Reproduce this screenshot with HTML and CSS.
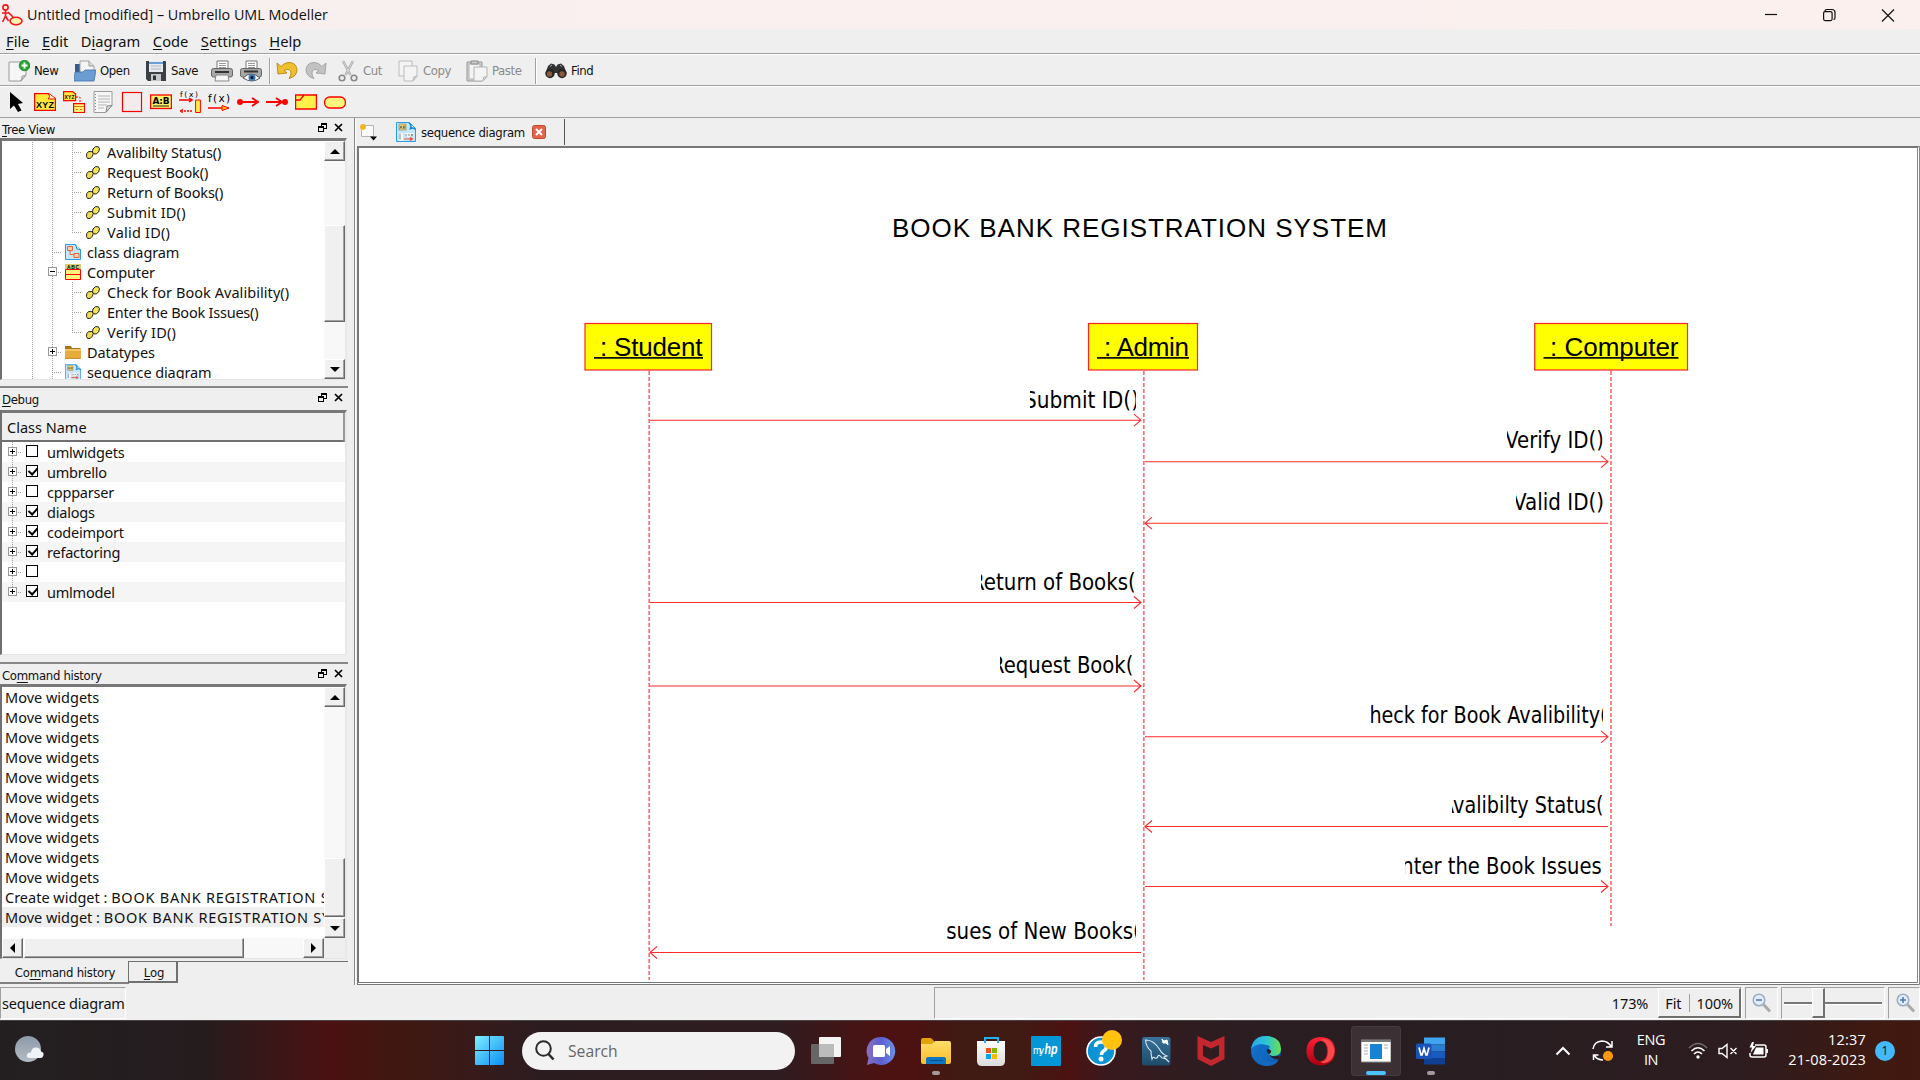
FILE: index.html
```html
<!DOCTYPE html>
<html lang="en">
<head>
<meta charset="utf-8">
<title>Untitled [modified] – Umbrello UML Modeller</title>
<link rel="stylesheet" href="styles.css">
</head>
<body>
<svg class="defs" width="0" height="0" aria-hidden="true">
  <defs>
    <linearGradient id="gWin" x1="0" y1="0" x2="1" y2="1"><stop offset="0" stop-color="#7ef0ff"/><stop offset="1" stop-color="#0a8cf5"/></linearGradient>
    <linearGradient id="gTeams" x1="0" y1="0" x2="1" y2="0"><stop offset="0" stop-color="#8a6fc0"/><stop offset=".5" stop-color="#5a5fd0"/><stop offset="1" stop-color="#6a8fe8"/></linearGradient>
    <linearGradient id="gFold" x1="0" y1="0" x2="0" y2="1"><stop offset="0" stop-color="#ffdc6b"/><stop offset="1" stop-color="#fcbf28"/></linearGradient>
    <linearGradient id="gBag" x1="0" y1="0" x2="0" y2="1"><stop offset="0" stop-color="#fff"/><stop offset="1" stop-color="#dcdcdc"/></linearGradient>
    <linearGradient id="gSql" x1="0" y1="0" x2="0" y2="1"><stop offset="0" stop-color="#39729c"/><stop offset="1" stop-color="#1d4c68"/></linearGradient>
    <linearGradient id="gEdge" x1="0" y1="0" x2="1" y2="0"><stop offset="0" stop-color="#2aa5ee"/><stop offset=".55" stop-color="#2fc6cf"/><stop offset="1" stop-color="#6be04a"/></linearGradient>
    <linearGradient id="gEdge2" x1="0" y1="0" x2="1" y2="1"><stop offset="0" stop-color="#0f7bdc"/><stop offset="1" stop-color="#1157a8"/></linearGradient>
    <linearGradient id="gOpera" x1="0" y1="0" x2="0" y2="1"><stop offset="0" stop-color="#ff2038"/><stop offset="1" stop-color="#a8000f"/></linearGradient>
    <linearGradient id="gSky" x1="0" y1="0" x2="0" y2="1"><stop offset="0" stop-color="#8c9aa8"/><stop offset="1" stop-color="#b4bcc4"/></linearGradient>
    <symbol id="op" viewBox="0 0 14 13"><path d="M.700 7.700 2.500 5.600h3.300L7.300 7.200 6.500 10l-2.200 2.400H1.500L.500 10.500Z" fill="#f0dc50" stroke="#222"/><path d="M7 3 9.300.700h3L13.500 2.800l-.8 3L10.200 7.900H8L6.500 6Z" fill="#f5e35a" stroke="#222"/></symbol>
    <symbol id="float" viewBox="0 0 9 9"><path d="M3 0h6v6H6v3H0V3h3ZM4 2v1h2v2h2V2ZM1 5v3h4V5Z" fill="#000" fill-rule="evenodd"/></symbol>
    <symbol id="close" viewBox="0 0 9 9"><path d="m1 1 7 7M8 1 1 8" stroke="#000" stroke-width="1.700"/></symbol>
    <symbol id="seq" viewBox="0 0 20 20"><path d="M.500.500h13l6 6v13H.500Z" fill="#c6e6fa" stroke="#2d9be6"/><path d="M13 1q3 2 1.500 5.500Q18 5 19.500 7.500" fill="#e8f6ff" stroke="#1487dc" stroke-width="1.500"/><path d="M3 2h7v6H3Z" fill="#e8d27a" stroke="#8c7850" stroke-width=".6"/><path d="M4 6.500 5 4l1 2.500M7.500 3.700v3M8.800 3.700v3" stroke="#554" fill="none" stroke-width=".8"/><path d="M3 11h4v8H3Zm6 0h9v4H9Z" fill="#fff" opacity=".8"/><path d="M4 11.500v6M10 12v2.500M12 13h2M15 12l2 2.500M17 12l-2 2.500" stroke="#667" stroke-width=".8"/><path d="M8 17h8m-2-1.500 2.500 1.500-2.500 1.500" stroke="#e8523c" stroke-width="1.200" fill="none"/></symbol>
  </defs>
</svg>

<div class="window">
  <header class="title-bar">
    <svg class="app-icon" width="22" height="22" viewBox="0 0 22 22" fill="none" stroke="#f01818" stroke-width="1.600"><circle cx="4.500" cy="3.500" r="2.600"/><path d="M4.500 6v6M1 9h7M4.500 12l-3 6M4.500 12l3 5M7 8l6 6"/><ellipse cx="15" cy="17" rx="6" ry="3.800" fill="#fdf3b0"/></svg>
    <span class="caption">Untitled [modified] – Umbrello UML Modeller</span>
    <svg class="win-ctl" width="130" height="14" viewBox="0 0 130 14" fill="none" stroke="#111" stroke-width="1.200"><path d="M0 6.500h12"/><path d="M60 3.500q0-2 2-2h5q3 0 3 3v5q0 2-1.500 2"/><rect x="58.600" y="3.600" width="8.500" height="9" rx="1.500"/><path d="m117 1.500 12 12m0-12-12 12"/></svg>
  </header>

  <nav class="menu-bar"><span><u>F</u>ile</span><span><u>E</u>dit</span><span>D<u>i</u>agram</span><span><u>C</u>ode</span><span><u>S</u>ettings</span><span><u>H</u>elp</span></nav>

  <div class="toolbar main-tools">
    <svg width="22" height="22" viewBox="0 0 22 22"><path d="M1 2h13l4 3v10l-5 6H1Z" fill="#f6f6f6" stroke="#9a9a9a"/><path d="m13 21 1-5 4-1Z" fill="#ccc" stroke="#888" stroke-width=".6"/><circle cx="16.500" cy="5.500" r="5.300" fill="#26a534" stroke="#13721e" stroke-width=".7"/><path d="M16.500 2.500v6m-3-3h6" stroke="#fff" stroke-width="2"/></svg><span>New</span>
    <svg width="22" height="22" viewBox="0 0 22 22"><path d="M1 4h6l2 3h10v13H1Z" fill="#315c8c"/><path d="M6 1h9l5 5v7H6Z" fill="#f5f5f5" stroke="#a0a0a0"/><path d="M15 1v5h5" fill="#ddd" stroke="#999"/><path d="M1 12h8l2-2h11l-2 11H0Z" fill="#6b9cd2" stroke="#3f71a8" stroke-width=".8"/></svg><span>Open</span>
    <svg width="22" height="22" viewBox="0 0 22 22"><path d="M1 1h19q1 0 1 1v19H3l-2-2Z" fill="#3c3f43"/><path d="M4 1h14v11H4Z" fill="#e6eaef"/><path d="M4 2h14v2H4Z" fill="#6a9ed6"/><path d="M6 6h10M6 9h10" stroke="#b5b9be"/><path d="M6 14h10v7H6Z" fill="#c4c7cb"/><path d="M8 15.500h3V20H8Z" fill="#333"/></svg><span>Save</span>
    <svg width="22" height="22" viewBox="0 0 22 22"><path d="M6 1h11v9H6Z" fill="#fff" stroke="#777"/><path d="M8 3.500h7M8 5.500h7M8 7.500h7" stroke="#999"/><rect x=".5" y="8.500" width="21" height="8.500" rx="2" fill="#a8a8a8" stroke="#666"/><path d="M4 11h14v2H4Z" fill="#333"/><path d="M5 15h12l1 6H4Z" fill="#f5f5f5" stroke="#888"/></svg>
    <svg width="22" height="22" viewBox="0 0 22 22"><path d="M6 1h11v9H6Z" fill="#fff" stroke="#777"/><path d="M8 3.500h7M8 5.500h7M8 7.500h7" stroke="#999"/><rect x=".5" y="8.500" width="21" height="8.500" rx="2" fill="#a8a8a8" stroke="#666"/><path d="M4 10.500h14v2H4Z" fill="#333"/><path d="M3 18q8-8 17 0-8 6-17 0Z" fill="#fff" stroke="#555"/><circle cx="12" cy="17.500" r="3.500" fill="#3f78b4"/><circle cx="12" cy="17.500" r="1.500" fill="#112"/></svg>
    <i class="sep"></i>
    <svg width="22" height="20" viewBox="0 0 22 20"><path d="m1 2 1 11 9-1-3-2.500q7-3 7 3 0 2-2 5 8-2 8-9Q20 1 12 1.500 8 2 5 5.500Z" fill="#eebf2e" stroke="#b8860b" stroke-width=".9"/></svg>
    <svg width="22" height="20" viewBox="0 0 22 20"><path d="m21 2-1 11-9-1 3-2.500q-7-3-7 3 0 2 2 5-8-2-8-9Q2 1 10 1.500q4 .5 7 4Z" fill="#c2c2c2" stroke="#a0a0a0" stroke-width=".9"/></svg>
    <svg width="20" height="22" viewBox="0 0 20 22" fill="none" stroke="#a2a2a2"><path d="M5 1 12.500 15M15 1 7.500 15" stroke-width="2.400"/><path d="M5 1 12.500 15M15 1 7.500 15" stroke="#e8e8e8" stroke-width=".8"/><circle cx="4" cy="18" r="2.800" stroke="#888" stroke-width="1.600"/><circle cx="16" cy="18" r="2.800" stroke="#888" stroke-width="1.600"/></svg><span class="off">Cut</span>
    <svg width="20" height="22" viewBox="0 0 20 22" fill="#f4f4f4" stroke="#bcbcbc"><path d="M1 1h13v15H1Z"/><path d="M6 6h13v10l-4 5H6Z"/><path d="m15 21 .5-4 3.500-1Z" fill="#ddd"/></svg><span class="off">Copy</span>
    <svg width="22" height="22" viewBox="0 0 22 22" fill="#f4f4f4" stroke="#b4b4b4"><path d="M1 2h15v19H1Z" fill="#d0d0d0" stroke="#999"/><path d="M3 4h11v15H3Z"/><path d="M5 1h7v3H5Z" fill="#ccc" stroke="#888"/><path d="M8 7h13v10l-4 4H8Z"/><path d="m17 21 .5-4H21Z" fill="#ddd"/></svg><span class="off">Paste</span>
    <i class="sep"></i>
    <svg width="22" height="16" viewBox="0 0 22 16"><path d="m3 3 3-2.500 3.500 1L11 4l1.500-2.500L16 .500 19 3l2.500 7H.500Z" fill="#333"/><circle cx="5" cy="10.500" r="4.700" fill="#262626"/><circle cx="17" cy="10.500" r="4.700" fill="#262626"/><circle cx="4.500" cy="11" r="2.700" fill="#8c5a38"/><circle cx="17" cy="11" r="2.700" fill="#8c5a38"/><path d="M5 3.500 7 2M15 2l2 1.500" stroke="#aaa"/></svg><span>Find</span>
  </div>

  <div class="toolbar uml-tools">
    <svg viewBox="0 0 22 22"><path d="M1 1v17l4-3.500 4 6.500 3.500-1.500L9 13l5-1Z" fill="#000"/></svg>
    <svg viewBox="0 0 22 22"><path d="M.6 2.600h14l6.800 5v11.800H.600Z" fill="#ffe93c" stroke="red" stroke-width="1.200"/><path d="M14.500 2.500q2 3 0 5.500h7" fill="#fffac0" stroke="red"/><text x="2" y="16.500" class="t-xyz" textLength="18">XYZ</text></svg>
    <svg viewBox="0 0 22 22"><path d="M.6.600h9l3 2.500v6.500H.600Z" fill="#ffe93c" stroke="red" stroke-width="1.200"/><text x="1.500" y="8" class="t-xs" textLength="10">XYZ</text><path d="M13 6h4v6" fill="none" stroke="red" stroke-dasharray="2 1.500"/><path d="M10.600 12.600h11v9h-11Z" fill="#fff17a" stroke="red" stroke-width="1.200"/><path d="M11 15.500h10M13 18.500h2m2 0h2" stroke="#e07800"/></svg>
    <svg viewBox="0 0 22 22"><path d="M2 .500h18v14l-6 7H2Z" fill="#f6f6f6" stroke="#9a9a9a"/><path d="M6 5h12M6 8h12M6 11h12M6 14h9M6 17h6" stroke="#b4b4b4"/><path d="m14 21 1-6 5-.500Z" fill="#ddd" stroke="#888"/><path d="M3.500 3v17" stroke="#888" stroke-dasharray="1 2"/></svg>
    <svg viewBox="0 0 22 22"><rect x="1.500" y="1.500" width="19" height="19" fill="#f3ecec" stroke="red" stroke-width="1.200"/></svg>
    <svg viewBox="0 0 22 22"><rect x=".6" y="4" width="20.800" height="13.500" fill="#fff36b" stroke="red" stroke-width="1.300"/><text x="2.500" y="13" class="t-ab" textLength="17">A:B</text><path d="M3 15h16" stroke="#222"/></svg>
    <svg viewBox="0 0 22 22"><text x="1" y="5.500" class="t-fs" textLength="18">f(x)</text><path d="M0 9h13m-3-2 3 2-3 2M1 20h13" stroke="red" stroke-width="1.500" fill="none"/><path d="M1 20h13" stroke="#efefef" stroke-width="2" stroke-dasharray="1 2"/><path d="m4 18-3 2 3 2" stroke="red" fill="none"/><path d="M16.600 9h4.800v12.500h-4.800Z" fill="#ffee44" stroke="red"/></svg>
    <svg viewBox="0 0 22 22"><text x="0" y="11" class="t-fx" textLength="22">f(x)</text><path d="M0 17h20" stroke="red" stroke-width="1.500"/><path d="m14 14.500 7 2.500-7 2.500Z" fill="#fc0" stroke="red"/></svg>
    <svg viewBox="0 0 22 22"><circle cx="3" cy="11" r="3" fill="red"/><path d="M3 11h18m-6-4 6 4-6 4" stroke="red" stroke-width="1.800" fill="none"/></svg>
    <svg viewBox="0 0 22 22"><circle cx="19" cy="11" r="3" fill="red"/><path d="M0 11h16m-6-4 6 4-6 4" stroke="red" stroke-width="1.800" fill="none"/></svg>
    <svg viewBox="0 0 22 22"><path d="M.6 4h20.800v14H.600Z" fill="#fff04a" stroke="red" stroke-width="1.300"/><path d="M1 9h4l4-5" fill="none" stroke="red" stroke-width="1.300"/></svg>
    <svg viewBox="0 0 22 22"><rect x=".6" y="6" width="20.800" height="11" rx="5" fill="#fdf57c" stroke="red" stroke-width="1.300"/></svg>
  </div>

  <div class="workspace">
    <aside class="docks">
      <section class="dock dock-tree">
        <h2><span><u>T</u>ree View</span><svg width="9" height="9"><use href="#float"/></svg><svg width="9" height="9"><use href="#close"/></svg></h2>
        <div class="box">
          <ul class="tree">
            <li><i class="g"></i><i class="g"></i><i class="g stub"></i><svg class="op"><use href="#op"/></svg><span>Avalibilty Status()</span></li>
            <li><i class="g"></i><i class="g"></i><i class="g stub"></i><svg class="op"><use href="#op"/></svg><span>Request Book()</span></li>
            <li><i class="g"></i><i class="g"></i><i class="g stub"></i><svg class="op"><use href="#op"/></svg><span>Return of Books()</span></li>
            <li><i class="g"></i><i class="g"></i><i class="g stub"></i><svg class="op"><use href="#op"/></svg><span class="loose">Submit ID()</span></li>
            <li><i class="g"></i><i class="g"></i><i class="g stub last"></i><svg class="op"><use href="#op"/></svg><span class="loose">Valid ID()</span></li>
            <li><i class="g"></i><i class="g stub"></i><svg class="cls" viewBox="0 0 16 16"><path d="M.500.500h10l5 5v10H.500Z" fill="#c6e6fa" stroke="#2d9be6"/><path d="M10.500.500 12 5l3.500.500" fill="#fff" stroke="#1487dc"/><path d="M2.500 2.500h5v4h-5Zm6.500 7h5v4H9Z" fill="#fbd6b0" stroke="#e8643c"/><path d="M5 6.500v4h4" stroke="#e8643c" fill="none"/></svg><span>class diagram</span></li>
            <li><i class="g"></i><i class="g stub"><b class="exp minus"></b></i><svg class="cls" viewBox="0 0 16 16"><path d="M0 0h16v6H0Z" fill="#d8cf70"/><path d="M.500 5.500h15v10H.500Z" fill="#fff27a" stroke="red"/><path d="M1 10.500h14" stroke="red"/><text x="2" y="4.500" class="t-xs" textLength="12">ABC</text></svg><span>Computer</span></li>
            <li><i class="g"></i><i class="g"></i><i class="g stub"></i><svg class="op"><use href="#op"/></svg><span class="airy">Check for Book Avalibility()</span></li>
            <li><i class="g"></i><i class="g"></i><i class="g stub"></i><svg class="op"><use href="#op"/></svg><span class="snug">Enter the Book Issues()</span></li>
            <li><i class="g"></i><i class="g"></i><i class="g stub last"></i><svg class="op"><use href="#op"/></svg><span class="loose">Verify ID()</span></li>
            <li><i class="g"></i><i class="g stub"><b class="exp plus"></b></i><svg class="cls" viewBox="0 0 16 16"><path d="M0 2h6l1 2h8.500v11H0Z" fill="#a87420"/><path d="M0 5h16v9.500H0Z" fill="#e6ac3c"/><path d="M0 5h16v2H0Z" fill="#f2c666"/></svg><span>Datatypes</span></li>
            <li><i class="g"></i><i class="g stub"></i><svg class="cls"><use href="#seq"/></svg><span>sequence diagram</span></li>
          </ul>
          <div class="vscroll"><b class="btn up"></b><div class="track"><b class="thumb tree-thumb"></b></div><b class="btn down"></b></div>
        </div>
      </section>

      <section class="dock dock-debug">
        <h2><span><u>D</u>ebug</span><svg width="9" height="9"><use href="#float"/></svg><svg width="9" height="9"><use href="#close"/></svg></h2>
        <div class="box debug-box">
          <div class="col-head">Class Name</div>
          <ul class="checks">
            <li><i class="g stub"><b class="exp plus"></b></i><b class="cb"></b><span>umlwidgets</span></li>
            <li><i class="g stub"><b class="exp plus"></b></i><b class="cb on"></b><span>umbrello</span></li>
            <li><i class="g stub"><b class="exp plus"></b></i><b class="cb"></b><span>cppparser</span></li>
            <li><i class="g stub"><b class="exp plus"></b></i><b class="cb on"></b><span>dialogs</span></li>
            <li><i class="g stub"><b class="exp plus"></b></i><b class="cb on"></b><span>codeimport</span></li>
            <li><i class="g stub"><b class="exp plus"></b></i><b class="cb on"></b><span>refactoring</span></li>
            <li><i class="g stub"><b class="exp plus"></b></i><b class="cb"></b><span></span></li>
            <li><i class="g stub last"><b class="exp plus"></b></i><b class="cb on"></b><span>umlmodel</span></li>
          </ul>
        </div>
      </section>

      <section class="dock dock-cmd">
        <h2><span>Co<u>m</u>mand history</span><svg width="9" height="9"><use href="#float"/></svg><svg width="9" height="9"><use href="#close"/></svg></h2>
        <div class="box cmd-box">
          <ul class="history">
            <li>Move widgets</li><li>Move widgets</li><li>Move widgets</li><li>Move widgets</li><li>Move widgets</li>
            <li>Move widgets</li><li>Move widgets</li><li>Move widgets</li><li>Move widgets</li><li>Move widgets</li>
            <li><span>Create widget : </span><span class="wide">BOOK BANK REGISTRATION SYSTEM</span></li>
            <li class="sel"><span>Move widget : </span><span class="wide">BOOK BANK REGISTRATION SYSTEM</span></li>
          </ul>
          <div class="vscroll"><b class="btn up"></b><div class="track"><b class="thumb cmd-thumb"></b></div><b class="btn down"></b></div>
          <div class="hscroll"><b class="btn left"></b><div class="track"><b class="thumb"></b></div><b class="btn right"></b></div>
        </div>
      </section>
      <div class="dock-tabs"><span class="cur">Co<u>m</u>mand history</span><span class="log"><u>L</u>og</span></div>
    </aside>

    <main class="editor">
      <div class="tabs">
        <svg class="new-tab" width="19" height="18" viewBox="0 0 19 18"><path d="M5 2.500h9.500v11H2.500V6" fill="#fafafa" stroke="#b4b4b4"/><circle cx="4" cy="4" r="3" fill="#f0b828"/><path d="M11 13.500h7l-3.500 4Z" fill="#000"/></svg>
        <div class="tab">
          <svg width="20" height="20"><use href="#seq"/></svg>
          <span>sequence diagram</span>
          <svg width="14" height="14" viewBox="0 0 14 14"><rect x=".5" y=".5" width="13" height="13" rx="2" fill="#e0654a" stroke="#c0492f"/><path d="m4 4 6 6m0-6-6 6" stroke="#fff" stroke-width="2"/></svg>
        </div>
      </div>
      <div class="canvas">
        <svg width="1558" height="835" viewBox="359 148 1558 835">
          <text class="head" x="892" y="237" textLength="495">BOOK BANK REGISTRATION SYSTEM</text>
          <g class="life"><path d="M649.200 371V980M1143.800 371V980M1611 371V926"/></g>
          <g class="role">
            <rect x="585" y="323.500" width="126.500" height="46.500"/><rect x="1088.500" y="323.500" width="109" height="46.500"/><rect x="1534.700" y="323.500" width="152.800" height="46.500"/>
            <text x="600" y="356" textLength="102.500">: Student</text><text x="1104" y="356" textLength="85">: Admin</text><text x="1550" y="356" textLength="128.500">: Computer</text>
            <path d="M594 357.800h109M1097 357.800h92M1543.500 357.800h135"/>
          </g>
          <g class="msg">
            <path d="M650 420.200h491m-7-6 7 6-7 6"/>
            <path d="M1145 461.700h463m-7-6 7 6-7 6"/>
            <path d="M1608 523.200h-463m7-6-7 6 7 6"/>
            <path d="M650 602.500h491m-7-6 7 6-7 6"/>
            <path d="M650 686h491m-7-6 7 6-7 6"/>
            <path d="M1145 736.800h463m-7-6 7 6-7 6"/>
            <path d="M1608 826.500h-463m7-6-7 6 7 6"/>
            <path d="M1145 886.500h463m-7-6 7 6-7 6"/>
            <path d="M1141 952.500h-491m7-6-7 6 7 6"/>
          </g>
          <g class="lbl">
            <svg x="1030" y="386" width="106" height="28"><text x="-6" y="21.500" textLength="115" lengthAdjust="spacingAndGlyphs">Submit ID()</text></svg>
            <svg x="1507" y="426" width="95.500" height="28"><text x="-2" y="22" textLength="99" lengthAdjust="spacingAndGlyphs">Verify ID()</text></svg>
            <svg x="1516" y="488" width="87" height="28"><text x="-3" y="21.500" textLength="91" lengthAdjust="spacingAndGlyphs">Valid ID()</text></svg>
            <svg x="981" y="568" width="153.500" height="28"><text x="-10" y="22" textLength="172.500" lengthAdjust="spacingAndGlyphs">Return of Books()</text></svg>
            <svg x="1000" y="651" width="132.500" height="28"><text x="-9" y="22" textLength="150" lengthAdjust="spacingAndGlyphs">Request Book()</text></svg>
            <svg x="1371" y="701" width="232" height="28"><text x="-15" y="21.500" textLength="259" lengthAdjust="spacingAndGlyphs">Check for Book Avalibility()</text></svg>
            <svg x="1452" y="791" width="151" height="28"><text x="-11" y="22" textLength="170" lengthAdjust="spacingAndGlyphs">Avalibilty Status()</text></svg>
            <svg x="1405" y="852" width="196" height="28"><text x="-16" y="22" textLength="228" lengthAdjust="spacingAndGlyphs">Enter the Book Issues()</text></svg>
            <svg x="947" y="917" width="189" height="28"><text x="-17" y="22" textLength="218.500" lengthAdjust="spacingAndGlyphs">Issues of New Books()</text></svg>
          </g>
        </svg>
      </div>
    </main>
  </div>

  <footer class="status">
    <div class="cell msg-cell">sequence diagram</div>
    <div class="cell zoom-cell"><span>173%</span><div class="fit"><span>Fit</span><i></i><span>100%</span></div></div>
    <div class="cell mag"><svg width="20" height="20" viewBox="0 0 20 20" fill="none"><path d="m11.500 11.500 6.500 7" stroke="#aaa" stroke-width="3"/><circle cx="7" cy="7" r="5.800" fill="#e2ecf8" stroke="#9cadc2" stroke-width="1.500"/><path d="M4 7h6" stroke="#4a78b0" stroke-width="1.500"/></svg></div>
    <div class="cell slider"><i></i><b></b></div>
    <div class="cell mag mag-in"><svg width="20" height="20" viewBox="0 0 20 20" fill="none"><path d="m11.500 11.500 6.500 7" stroke="#aaa" stroke-width="3"/><circle cx="7" cy="7" r="5.800" fill="#e2ecf8" stroke="#9cadc2" stroke-width="1.500"/><path d="M4 7h6M7 4v6" stroke="#4a78b0" stroke-width="1.500"/></svg></div>
  </footer>
</div>

<div class="taskbar">
  <svg class="weather" width="30" height="30" viewBox="0 0 30 30"><circle cx="13" cy="13" r="13" fill="url(#gSky)"/><path d="M14 22q-3-1-2-3.500 1-2.500 4-2 1-5.500 5-5 4 0 5 4 3 .5 2.500 3.500-.5 3-3 3Z" fill="#f0f3f5"/></svg>
  <svg class="start" width="29" height="29" viewBox="0 0 29 29" fill="url(#gWin)"><path d="M1 0h13v14H0V1Q0 0 1 0Zm14 0h13q1 0 1 1v13H15ZM0 15h14v14H1q-1 0-1-1Zm15 0h14v13q0 1-1 1H15Z"/></svg>
  <div class="search"><svg width="20" height="21" viewBox="0 0 20 21" fill="none" stroke="#2b2b2b" stroke-width="2"><circle cx="8.500" cy="8.500" r="7.300"/><path d="m13.500 14 5 5.500" stroke-width="2.600"/></svg><span>Search</span></div>
  <div class="apps">
    <div class="app"><svg viewBox="0 0 30 30"><rect x="0" y="8" width="23" height="20" rx="1" fill="#666"/><rect x="8" y="1" width="22" height="20" rx="1" fill="#f4f4f4"/><path d="M8 8h15v13H8Z" fill="#bcbcbc"/></svg></div>
    <div class="app"><svg viewBox="0 0 30 30"><path d="M15 1a14 14 0 1 1-7 26l-7 2 1.500-7A14 14 0 0 1 15 1Z" fill="url(#gTeams)"/><rect x="7" y="9" width="12" height="12" rx="1.500" fill="#fff"/><path d="m20 13 4-3v10l-4-3Z" fill="#fff"/></svg></div>
    <div class="app run"><svg viewBox="0 0 30 30"><path d="M0 4q0-2 2-2h8l3 3v5H0Z" fill="#e2a306"/><path d="M0 8h11l3-3h14q2 0 2 2v19q0 2-2 2H2q-2 0-2-2Z" fill="url(#gFold)"/><path d="M5 28v-5q0-2 2-2h16q2 0 2 2v5Z" fill="#0f76c4"/><path d="M9 24.500h13" stroke="#074f8c"/></svg></div>
    <div class="app"><svg viewBox="0 0 30 30"><path d="M1 5h28v20q0 5-5 5H6q-5 0-5-5Z" fill="url(#gBag)"/><path d="M9 7V2h13v5" fill="none" stroke="#23b0ee" stroke-width="2"/><path d="M10 12h5v5h-5Z" fill="#f25022"/><path d="M16 12h5v5h-5Z" fill="#7fba00"/><path d="M10 18h5v5h-5Z" fill="#00a4ef"/><path d="M16 18h5v5h-5Z" fill="#ffb900"/></svg></div>
    <div class="app"><svg viewBox="0 0 30 30"><rect width="30" height="30" rx="1" fill="#0596d5"/><text x="2" y="18" class="t-my" textLength="11">my</text><text x="13.500" y="18" class="t-hp" textLength="13" lengthAdjust="spacingAndGlyphs">hp</text></svg></div>
    <div class="app"><svg viewBox="0 0 30 30" overflow="visible"><circle cx="15" cy="15" r="14" fill="#0a94d6" stroke="#fff" stroke-width="1.600"/><path d="M9.500 11q0-5 5.500-5t5.500 4.500q0 3-3 4.500-2 1-2 4" fill="none" stroke="#fff" stroke-width="3.600"/><circle cx="15" cy="23" r="2.500" fill="#fff"/><circle cx="26" cy="4" r="10" fill="#ffc20e"/></svg></div>
    <div class="app"><svg viewBox="0 0 30 30"><rect x="1" y="1" width="28.500" height="28.500" rx="2.500" fill="url(#gSql)"/><path d="M5 4q8 0 14 10 2 4 7 6l-3 1 5 5q-3-4-7-4-3-4-4-2-1 3-3 2-2-2-3 1-1-4-1-8Q5 11 4.500 4Z" fill="none" stroke="#dce8f0" stroke-width="1.100"/><path d="m21 3 2 2 3-1 1 5-2-2-3 0Z" fill="#fff" stroke="#fff"/></svg></div>
    <div class="app"><svg viewBox="0 0 30 30"><path d="m1.500 0 13.500 6L28.500 0v23L15 30 1.500 23ZM7 9v11l8 4 8-4V9l-8 3.500Z" fill="#c1272d" fill-rule="evenodd"/></svg></div>
    <div class="app"><svg viewBox="0 0 30 30"><circle cx="15" cy="15" r="15" fill="url(#gEdge2)"/><path d="M0 13Q2 0 15 0q15 1 15 13 0 7-8 7-4 0-4-2 2-2 1-4-2-6-9-6-7 1-10 5Z" fill="url(#gEdge)"/><path d="M19 12q-5-3-8 1-3 6 3 11 6 4 14 0-4 6-13 6Q3 28 5 17q2-9 10-8 4 0 4 3Z" fill="#1468bf"/><path d="M18 18q-3-2-2-5 5 1 4 3-1 2-2 2Z" fill="#2b1d21"/><path d="M18 18.500q4 3 11 1l-1 3.500q-6 1-10-4.500Z" fill="#2b1d21"/></svg></div>
    <div class="app"><svg viewBox="0 0 30 30"><path d="M14 1q15 0 15 14T14 29.500Q.500 28 .500 15T14 1Zm1 4q-7 0-7.500 10T15 25q6-1 6-10T15 5Z" fill="url(#gOpera)" fill-rule="evenodd"/><path d="M14 4q6-3 11 2 7 9 0 18-5 5-11 2 8-1 8-11T14 4Z" fill="#fa4a4a"/></svg></div>
    <div class="app active"><svg viewBox="0 0 30 30"><rect x="0" y="4" width="30" height="22" fill="#fdfdfd" stroke="#8a8a8a"/><path d="M0 4h30v2H0Z" fill="#777"/><rect x="9" y="8" width="12" height="15" fill="#1582d4"/><path d="M3 9h4M3 12h4M3 15h4M3 18h4M23 9h4M23 12h4" stroke="#aaa"/></svg></div>
    <div class="app run"><svg viewBox="0 0 30 30"><path d="M8 1.500h21v7H8Z" fill="#41a5ee"/><path d="M8 8.500h21v7H8Z" fill="#2b7cd3"/><path d="M8 15.500h21v7H8Z" fill="#185abd"/><path d="M8 22h21v6.500H8Z" fill="#103f91"/><rect x="0" y="7.500" width="15.500" height="15.500" rx="1.500" fill="#1a53b8"/><path d="m3 11.500 2 7.500h1l2-6.500 2 6.500h1l2-7.500" fill="none" stroke="#fff" stroke-width="1.700"/></svg></div>
  </div>
  <div class="tray">
    <svg width="16" height="12" viewBox="0 0 16 12" fill="none" stroke="#fff" stroke-width="2"><path d="m1.500 9.500 6.500-6.500 6.500 6.500"/></svg>
    <svg width="22" height="22" viewBox="0 0 22 22" fill="none" stroke="#fff" stroke-width="1.500"><path d="M1 9q1-7.500 9-8 6 0 9.500 6M20 1v6h-6M1.500 20v-5h5M2 15q3 5 9 5"/><circle cx="16" cy="16" r="5" fill="#ff9810" stroke="none"/></svg>
    <div class="lang"><span>ENG</span><span>IN</span></div>
    <svg width="20" height="20" viewBox="0 0 20 20" fill="none" stroke="#fff" stroke-width="1.600"><path d="M1 7q9-9 18 0" opacity=".35"/><path d="M3.500 10q6.500-6.500 13 0M6 13q4-4 8 0"/><circle cx="10" cy="16" r="1.700" fill="#fff" stroke="none"/></svg>
    <svg width="20" height="20" viewBox="0 0 20 20" fill="none" stroke="#fff" stroke-width="1.400"><path d="M1 7.500h3l5-4v13l-5-4H1Zm11.500-.5 6 6m0-6-6 6"/></svg>
    <svg width="20" height="20" viewBox="0 0 20 20" fill="none" stroke="#fff" stroke-width="1.500"><path d="M7 4h9q2 0 2 2v8q0 2-2 2H4q-2 0-2-2v-2M19.200 8v4"/><path d="M8 6.500h7.500v7H5Z" fill="#fff" stroke="none"/><path d="M4 1 1.500 6.500H4L2.500 12l5.500-7H5l1-4Z" fill="#fff" stroke="none"/></svg>
    <div class="clock"><span>12:37</span><span>21-08-2023</span></div>
    <b class="badge">1</b>
  </div>
</div>
</body>
</html>
```

FILE: styles.css
```css
* { box-sizing: border-box; }
body { margin: 0; width: 1920px; height: 1080px; overflow: hidden; background: #efefef; font-family: "Noto Sans", "Open Sans", sans-serif; font-size: 14px; color: #111; display: flex; flex-direction: column; }
ul, h2 { margin: 0; padding: 0; list-style: none; font-weight: normal; }
svg { display: block; flex: none; }
span { white-space: nowrap; }
u { text-underline-offset: 2px; }
.defs { position: absolute; }
.window { height: 1020px; display: flex; flex-direction: column; }

.title-bar { height: 29px; background: linear-gradient(90deg, #f7efef, #fbf0ee); display: flex; align-items: center; padding-left: 1px; }
.caption { margin-left: 4px; flex: 1; font-family: "Open Sans", sans-serif; font-size: 14.350px; }
.win-ctl { margin-right: 25px; }

.menu-bar { height: 26px; border-bottom: 1px solid #fff; box-shadow: inset 0 -1px #a0a0a0; display: flex; gap: 12.500px; align-items: center; padding: 0 0 2px 6px; font-size: 14.700px; }

.toolbar { height: 32px; border-bottom: 1px solid #fff; box-shadow: inset 0 -1px #a0a0a0; align-items: center; font-family: "DejaVu Sans Condensed", "Noto Sans", sans-serif; font-size: 13px; }
.main-tools { display: grid; grid-template-columns: 26px 40px 26px 45px 26px 40px 29px 29px 7px 29px 33px 25px 35px 25px 43px 26px 43px 10px 26px 60px; padding-left: 8px; }
.main-tools span { letter-spacing: -.4px; }
.off { color: #8a8a8a; }
.sep { width: 2px; height: 26px; background: #a0a0a0; border-right: 1px solid #fff; }
.uml-tools { display: flex; gap: 7px; padding: 0 0 2px 5px; height: 31px; border-bottom: 0; }
.uml-tools svg { width: 22px; height: 22px; }
.uml-tools svg:first-child { margin: 0 -4px 0 4px; }
text { font-family: "Liberation Sans", sans-serif; }
.t-xyz { font-weight: bold; font-size: 9px; }
.t-xs { font-weight: bold; font-size: 5px; }
.t-ab { font: bold 9px "DejaVu Sans", sans-serif; }
.t-fs { font: 7.500px "DejaVu Sans", sans-serif; }
.t-fx { font: 10.500px "DejaVu Sans", sans-serif; }
.t-my { font-size: 10px; fill: #fff; }
.t-hp { font-size: 15px; font-style: italic; font-weight: bold; fill: #fff; }

.workspace { height: 867px; display: flex; }
.docks { width: 354px; padding-right: 6px; display: flex; flex-direction: column; }
.dock { display: flex; flex-direction: column; }
.dock h2 { height: 20px; padding: 0 5px 0 2px; display: flex; align-items: center; gap: 7px; font-family: "DejaVu Sans Condensed", "Noto Sans", sans-serif; font-size: 13px; letter-spacing: -.3px; }
.dock h2 span { flex: 1; padding-top: 3px; }
.dock h2 svg { margin-bottom: 1px; }
.dock-tree { height: 268px; }
.dock-debug { height: 276px; border-top: 2px solid #888; }
.dock-cmd { height: 299px; border-top: 2px solid #888; }
.dock-debug h2 { height: 22px; padding-bottom: 2px; }
.box { flex: none; width: 347px; background: #fff; border: 2px solid #707070; border-top: 3px solid #787878; border-right: 2px solid #e8e8e8; border-bottom: 1px solid #e4e4e4; display: flex; overflow: hidden; }
.dock-tree .box { height: 242px; }
.tree { flex: 1; padding-top: 1px; }
.tree li { height: 20px; display: flex; align-items: center; padding-left: 30px; }
.tree li span, .checks span, .history li { font-size: 14.500px; letter-spacing: -.22px; line-height: 20px; }
.tree li span { letter-spacing: -.1px; }
.tree li .loose { letter-spacing: .22px; }
.tree li .airy { letter-spacing: .06px; }
.tree li .snug { letter-spacing: -.22px; }
.history li { letter-spacing: 0; }
.g { flex: none; width: 20px; height: 20px; position: relative; background: repeating-linear-gradient(#a0a0a0 0 1px, transparent 1px 2px) 0 0 / 1px 100% no-repeat; }
.g.last { background-size: 1px 10px; }
.g.stub { width: 13px; }
.g.stub::before { content: ""; position: absolute; left: 0; right: 3px; top: 10px; height: 1px; background: repeating-linear-gradient(90deg, #a0a0a0 0 1px, transparent 1px 2px); }
.op { width: 14px; height: 13px; margin: 1px 7px 0 1px; }
.cls { width: 16px; height: 16px; margin-right: 6px; }
.exp { position: absolute; left: -4px; top: 5px; width: 9px; height: 9px; border: 1px solid #999; background: linear-gradient(#000, #000) center / 5px 1px no-repeat, #fff; }
.exp.plus { background: linear-gradient(#000, #000) center / 5px 1px no-repeat, linear-gradient(#000, #000) center / 1px 5px no-repeat, #fff; }

.btn, .thumb { display: block; background: #f0f0f0; border: 1px solid #fff; border-right: 1px solid #696969; border-bottom: 1px solid #696969; box-shadow: inset -1px -1px #a0a0a0; }
.btn { flex: none; width: 21px; height: 20px; display: grid; place-items: center; }
.btn::before { content: ""; border: 5px solid transparent; }
.up::before { border-bottom-color: #000; border-top: 0; }
.down::before { border-top-color: #000; border-bottom: 0; }
.left::before { border-right-color: #000; border-left: 0; }
.right::before { border-left-color: #000; border-right: 0; }
.vscroll { width: 21px; display: flex; flex-direction: column; }
.track { flex: 1; background: #f8f8f8; }
.tree-thumb { height: 97px; margin-top: 64px; }
.cmd-thumb { height: 59px; margin-top: 151px; }

.debug-box { height: 245px; display: block; }
.col-head { height: 29px; padding: 0 5px; font-size: 14.500px; line-height: 29px; background: #f0f0f0; border-bottom: 2px solid #707070; border-right: 2px solid #999; }
.checks li { height: 20px; display: flex; align-items: center; padding-left: 10px; }
.checks li:nth-child(even) { background: #f5f5f5; }
.cb { width: 12px; height: 12px; border: 1px solid #000; margin: -3px 9px 0 1px; background: #fff; position: relative; outline: .5px solid #000; outline-offset: -1px; }
.cb.on::before { content: ""; position: absolute; left: 3px; top: 0; width: 4px; height: 7px; border: solid #000; border-width: 0 2px 2px 0; transform: rotate(42deg); }

.cmd-box { height: 275px; display: grid; grid-template: 251px 21px / 322px 21px; background: linear-gradient(#fff 251px, #efefef 251px); }
.cmd-box .btn { height: 20px; }
.history { overflow: hidden; }
.history li { height: 20px; padding-left: 3px; white-space: nowrap; }
.history .sel { background: #efefef; }
.wide { letter-spacing: .75px; }
.hscroll { display: flex; height: 21px; }
.hscroll .thumb { width: 220px; height: 20px; margin-left: 1px; }
.dock-tabs { height: 24px; border-top: 1px solid #707070; display: flex; font-family: "DejaVu Sans Condensed", "Noto Sans", sans-serif; font-size: 13px; letter-spacing: -.25px; }
.dock-tabs span { display: grid; grid-auto-flow: column; place-content: center; }
.cur { width: 129px; padding: 1px 0 0 2px; border-right: 1px solid #707070; border-bottom: 2px solid #808080; height: 23px; margin-top: -1px; background: #efefef; }
.log { width: 49px; height: 21px; padding: 1px 0 0 3px; border-right: 2px solid #707070; border-bottom: 2px solid #707070; }

.editor { flex: 1; border-left: 1px solid #888; padding-left: 2px; display: flex; flex-direction: column; box-shadow: inset 1px 0 #fff; }
.tabs { height: 28px; display: flex; align-items: center; padding-left: 2px; }
.tab { margin-left: 12px; width: 175px; height: 26px; padding-left: 6px; display: flex; align-items: center; gap: 5px; border-right: 1px solid #555; font-family: "DejaVu Sans Condensed", "Noto Sans", sans-serif; font-size: 13px; letter-spacing: -.3px; }
.tab span { width: 106px; }
.canvas { height: 839px; border: 2px solid #777; border-right: 3px double #888; border-bottom: 3px double #777; background: #fff; overflow: hidden; }
.head { font-size: 26px; }
.life path { fill: none; stroke: #ff6f6f; stroke-width: 1.700; stroke-dasharray: 4 2; }
.role rect { fill: #ff0; stroke: #f22; stroke-width: 1.200; }
.role text { font-size: 26px; }
.role path { stroke: #111; stroke-width: 1.700; }
.msg path { fill: none; stroke: #ff2a2a; stroke-width: 1.100; }
.lbl text { font: 23px "DejaVu Sans", sans-serif; }

.status { height: 35px; padding: 2px 0; display: flex; }
.cell { border: 1px solid #fff; border-top-color: #a0a0a0; border-left-color: #a0a0a0; height: 32px; display: flex; align-items: center; font-size: 14.500px; letter-spacing: -.1px; }
.msg-cell { width: 126px; padding-left: 1px; white-space: nowrap; letter-spacing: -.22px; }
.zoom-cell { margin-left: 808px; width: 810px; justify-content: flex-end; gap: 10px; }
.fit { width: 83px; height: 30px; display: flex; align-items: center; gap: 7px; padding-left: 6px; border: 1px solid #fff; border-right: 2px solid #707070; border-bottom: 2px solid #707070; }
.fit i { width: 1px; height: 18px; background: #a0a0a0; }
.mag { margin-left: 3px; width: 33px; justify-content: center; }
.slider { margin-left: 3px; width: 104px; position: relative; }
.slider i { width: 98px; height: 3px; margin-left: 2px; background: #777; border-bottom: 1px solid #fff; }
.slider b { position: absolute; left: 30px; top: 0; width: 13px; height: 30px; background: #f0f0f0; border: 1px solid #fff; border-right: 2px solid #707070; border-bottom: 2px solid #707070; }
.mag-in { width: 32px; padding-left: 4px; }

.taskbar { height: 60px; border-top: 1px solid #4a4344; display: flex; align-items: center; padding: 0 25px 0 15px; background: linear-gradient(90deg, #231f20 0, #251c1e 200px, #4a1111 330px, #401811 400px, #381a1a 470px, #2b1c20 540px, #2f1c20 780px, #4c1212 880px, #4c1212 915px, #3f1b13 960px, #3f1b13 1015px, #4c1212 1070px, #381a1e 1110px, #2b1d21 1230px, #281e21 1500px, #2d1c20 1740px, #40190f 1885px, #421810 1920px); color: #fff; font-family: "Open Sans", "Noto Sans", sans-serif; }
.start { margin-left: 430px; }
.search { margin-left: 18px; width: 273px; height: 38px; border-radius: 19px; background: #f3f2f2; color: #666; display: flex; align-items: center; gap: 13px; padding-left: 13px; font-size: 15.700px; }
.apps { display: flex; gap: 5px; margin-left: 6px; }
.app { width: 50px; height: 50px; display: grid; place-items: center; position: relative; border-radius: 4px; }
.app svg { width: 30px; height: 30px; }
.app.active { background: #3b3033; box-shadow: inset 0 0 0 1px #463c3f; }
.run::after, .active::after { content: ""; position: absolute; left: 21px; bottom: 1px; width: 8px; height: 4px; border-radius: 2px; background: #a59a9b; }
.active::after { left: 15px; width: 20px; background: #4cc2ff; }
.tray { margin-left: auto; display: flex; align-items: center; font-size: 14.500px; line-height: 20px; }
.tray > svg:nth-child(2) { margin: 0 22px 0 21px; }
.lang { width: 30px; display: flex; flex-direction: column; align-items: center; margin-right: 22px; padding-bottom: 2px; letter-spacing: -.4px; }
.tray > svg:nth-child(4), .tray > svg:nth-child(5) { margin-right: 10px; }
.clock { width: 98px; display: flex; flex-direction: column; align-items: flex-end; margin-right: 9px; padding-bottom: 2px; letter-spacing: .2px; }
.badge { width: 20px; height: 20px; border-radius: 50%; background: #44b9ff; color: #111; font-size: 12px; font-weight: normal; text-align: center; }
```
